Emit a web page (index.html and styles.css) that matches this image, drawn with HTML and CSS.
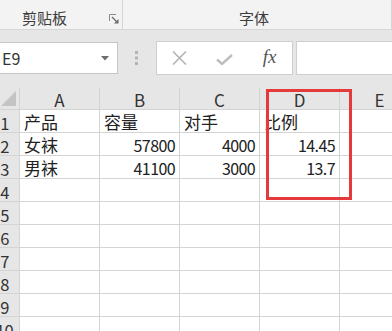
FILE: index.html
```html
<!DOCTYPE html>
<html lang="zh-CN">
<head>
  <meta charset="UTF-8">
  <meta name="viewport" content="width=device-width, initial-scale=1.0">
  <title>工作簿1 - Excel</title>
  <link rel="stylesheet" href="styles.css">
</head>
<body>
  <div class="ribbon">
    <div class="group clip">
      <span class="label">剪贴板</span>
      <svg class="launcher" width="10" height="10" viewBox="0 0 10 10">
        <path d="M0.5 7V0.5H7" fill="none" stroke="#8a8a8a" stroke-width="1"/>
        <path d="M3 3L8 8" stroke="#6a6a6a" stroke-width="1.2"/>
        <polygon points="9.5,5 9.5,9.5 5,9.5" fill="#6a6a6a"/>
      </svg>
    </div>
    <div class="group font">
      <span class="label">字体</span>
    </div>
  </div>

  <div class="fbar">
    <div class="namebox">
      <span>E9</span>
      <svg width="8" height="5" viewBox="0 0 8 5"><polygon points="0,0 8,0 4,4.5" fill="#6d6d6d"/></svg>
    </div>
    <div class="grip">
      <svg width="3" height="14" viewBox="0 0 3 14">
        <rect x="0" y="0" width="3" height="3" fill="#b4b4b4"/>
        <rect x="0" y="5.5" width="3" height="3" fill="#b4b4b4"/>
        <rect x="0" y="11" width="3" height="3" fill="#b4b4b4"/>
      </svg>
    </div>
    <div class="fbtns">
      <svg width="15" height="14" viewBox="0 0 15 14"><path d="M1 0.5L14 13.5M14 0.5L1 13.5" stroke="#b3b3b3" stroke-width="1.6"/></svg>
      <svg width="17" height="11" viewBox="0 0 17 11"><path d="M1 5.5L6 10L16 1" fill="none" stroke="#bdbdbd" stroke-width="2.4"/></svg>
      <span class="fx">fx</span>
    </div>
    <div class="finput"></div>
  </div>

  <div class="sheet">
    <div class="grid">
      <div class="hd corner"><svg width="15" height="15" viewBox="0 0 15 15"><polygon points="15,0 15,15 0,15" fill="#c4c4c4"/></svg></div>
      <div class="hd">A</div><div class="hd">B</div><div class="hd">C</div><div class="hd">D</div><div class="hd">E</div>

      <div class="rh">1</div><div class="c">产品</div><div class="c">容量</div><div class="c">对手</div><div class="c">比例</div><div class="c"></div>
      <div class="rh">2</div><div class="c">女袜</div><div class="c n">57800</div><div class="c n">4000</div><div class="c n">14.45</div><div class="c"></div>
      <div class="rh">3</div><div class="c">男袜</div><div class="c n">41100</div><div class="c n">3000</div><div class="c n">13.7</div><div class="c"></div>
      <div class="rh">4</div><div class="c"></div><div class="c"></div><div class="c"></div><div class="c"></div><div class="c"></div>
      <div class="rh">5</div><div class="c"></div><div class="c"></div><div class="c"></div><div class="c"></div><div class="c"></div>
      <div class="rh">6</div><div class="c"></div><div class="c"></div><div class="c"></div><div class="c"></div><div class="c"></div>
      <div class="rh">7</div><div class="c"></div><div class="c"></div><div class="c"></div><div class="c"></div><div class="c"></div>
      <div class="rh">8</div><div class="c"></div><div class="c"></div><div class="c"></div><div class="c"></div><div class="c"></div>
      <div class="rh">9</div><div class="c"></div><div class="c"></div><div class="c"></div><div class="c"></div><div class="c"></div>
      <div class="rh">10</div><div class="c"></div><div class="c"></div><div class="c"></div><div class="c"></div><div class="c"></div>
    </div>
    <div class="mark"></div>
  </div>
</body>
</html>
```

FILE: styles.css
```css
:root{
  --ribbon:#f3f3f3;
  --bar:#e6e6e6;
  --head:#e6e6e6;
  --grid:#d4d4d4;
  --line:#c9c9c9;
  --text:#222;
  --red:#e5393c;
}
*{box-sizing:border-box;margin:0}
body{
  width:392px;height:331px;overflow:hidden;
  font-family:"Noto Sans CJK SC","Noto Sans",sans-serif;
  color:var(--text);background:#fff;
}

/* ribbon */
.ribbon{display:flex;height:30px;background:var(--ribbon);border-bottom:1px solid #d6d6d6}
.group{display:flex;align-items:center;height:29px;border-right:1px solid #d6d6d6}
.group .label{font-size:15px;line-height:1;color:#3c3c3c;padding-top:5px}
.clip{width:123px;padding-left:22px}
.clip .launcher{margin-left:42px;margin-top:9px}
.font{width:269px;justify-content:center;padding-right:6px}

/* formula bar */
.fbar{display:flex;align-items:center;height:58px;background:var(--bar);padding-bottom:2px}
.namebox{
  display:flex;align-items:center;justify-content:space-between;
  width:122px;height:32px;margin-left:-4px;padding:0 8px 0 4px;
  background:#fff;border:1px solid #c6c6c6;
}
.namebox span{font-size:16px;line-height:1;color:#333;padding-left:1px}
.grip{width:38px;display:flex;justify-content:center;padding-right:1px}
.fbtns{
  display:grid;grid-template-columns:repeat(3,45px);align-items:center;justify-items:center;
  width:137px;height:34px;background:#fff;border:1px solid #cfcfcf;
}
.fbtns svg:first-child{margin-left:-1px}
.fbtns svg:nth-child(2){margin-top:2px}
.fx{font-family:"Liberation Serif","DejaVu Serif",serif;font-style:italic;font-size:19px;line-height:1;color:#555;margin-top:-3px}
.finput{flex:1;height:34px;margin-left:3px;background:#fff;border:1px solid #cfcfcf;border-right:0}

/* sheet */
.sheet{position:relative}
.grid{
  display:grid;
  grid-template-columns:29px repeat(5,79px);
  grid-template-rows:21px repeat(10,22px);
  gap:1px;background:var(--grid);
  margin-left:-10px;width:430px;
}
.hd,.rh{background:var(--head);color:#333;font-size:17px;line-height:1}
.hd{display:flex;align-items:flex-end;justify-content:center;padding-bottom:1px}
.hd.corner{justify-content:flex-end;padding:0 3px 3px 0}
.rh{display:flex;align-items:flex-end;justify-content:center;padding:0 0 1px 0;font-size:16.5px;letter-spacing:-.5px}
.c{background:#fff;font-size:17px;line-height:1;display:flex;align-items:flex-end;padding:0 4px 2px 4px;white-space:nowrap;overflow:visible}
.c.n{justify-content:flex-end;font-size:16px;letter-spacing:-.6px;padding-right:4px}

/* red highlight drawn over column D */
.mark{position:absolute;left:266px;top:1px;width:86px;height:111px;border:3.5px solid var(--red)}
```
